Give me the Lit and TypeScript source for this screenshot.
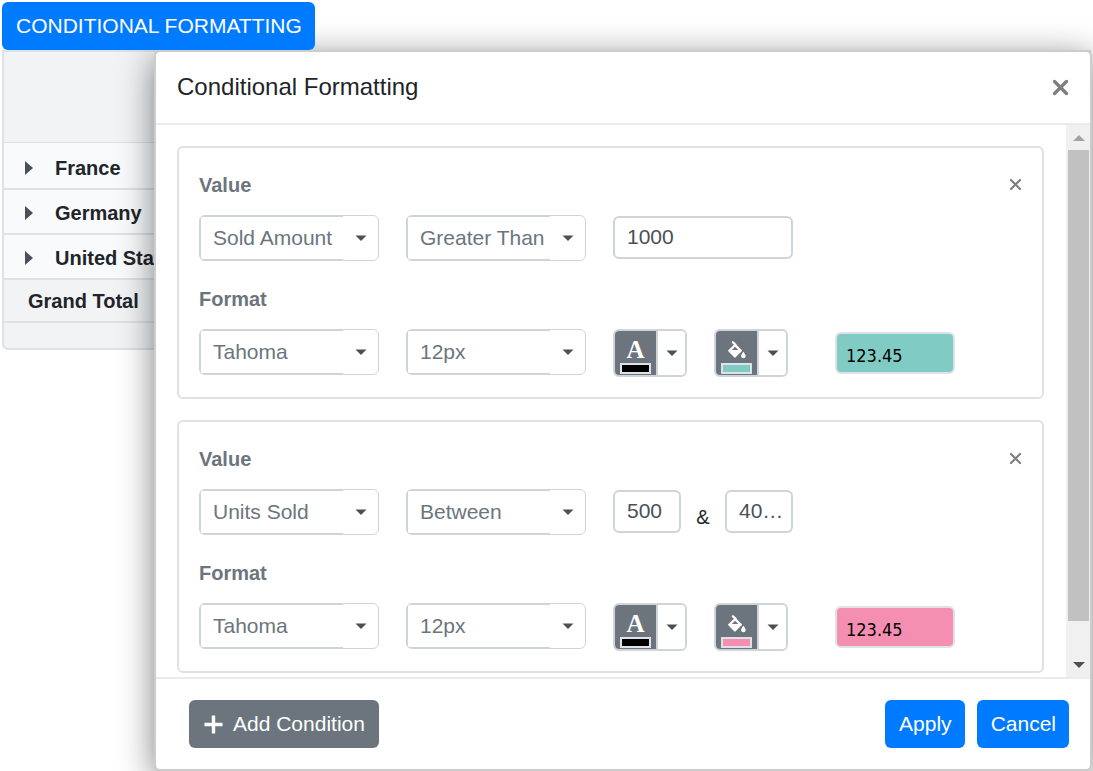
import { LitElement, html, css, svg } from "lit";
import { customElement, property } from "lit/decorators.js";

interface Condition {
  measure: string;
  operator: string;
  values: string[];
  font: string;
  size: string;
  color: string;
  fill: string;
}

const conditions: Condition[] = [
  { measure: "Sold Amount", operator: "Greater Than", values: ["1000"], font: "Tahoma", size: "12px", color: "#000000", fill: "#80cbc4" },
  { measure: "Units Sold", operator: "Between", values: ["500", "40000"], font: "Tahoma", size: "12px", color: "#000000", fill: "#f48fb1" },
];

const base = css`
  * {
    box-sizing: border-box;
  }
  button,
  input,
  select {
    font-family: inherit;
    font-size: 21px;
    margin: 0;
  }
  button {
    cursor: pointer;
  }
  svg {
    display: block;
  }
  .btn {
    display: flex;
    align-items: center;
    height: 48px;
    padding: 0 13px 0 14px;
    border: 0;
    border-radius: 6px;
    background: #007bff;
    color: #fff;
    white-space: nowrap;
  }
  .btn.secondary {
    gap: 10px;
    padding: 0 14px 0 15px;
    background: #6c757d;
  }
  .close {
    padding: 0;
    border: 0;
    background: none;
    color: #7f7f7f;
  }
`;

const caret = html`<svg class="caret" width="12" height="6" viewBox="0 0 12 6" aria-hidden="true">
  <path d="M0.5 0.5H11.5L6 6Z" fill="#495057" />
</svg>`;

const cross = (size: number, weight: number) => html`<svg width=${size} height=${size} viewBox="0 0 16 16" aria-hidden="true">
  ${svg`<path d="M2.4 2.4L13.6 13.6M13.6 2.4L2.4 13.6" fill="none" stroke="currentColor" stroke-width=${weight} stroke-linecap="round" />`}
</svg>`;

@customElement("condition-card")
class ConditionCard extends LitElement {
  @property({ attribute: false }) condition!: Condition;

  static styles = [
    base,
    css`
      :host {
        display: block;
        border: 2px solid #dee2e6;
        border-radius: 6px;
        padding: 22px 20px 20px;
      }
      .head {
        display: flex;
        justify-content: space-between;
        align-items: center;
        height: 30px;
        margin-bottom: 15px;
      }
      .head .close {
        padding-bottom: 1px;
      }
      h3 {
        margin: 0;
        font-size: 20px;
        line-height: 30px;
        font-weight: bold;
        color: #6c757d;
      }
      .row {
        display: flex;
        align-items: flex-start;
        gap: 27px;
      }
      .row.values {
        margin-bottom: 23px;
      }
      .select {
        display: grid;
        width: 180px;
      }
      select,
      .select .caret {
        grid-area: 1 / 1;
      }
      select {
        appearance: none;
        height: 46px;
        padding: 0 36px 2px 13px;
        border: 1px solid #ced4da;
        border-radius: 6px;
        color: #6c757d;
        background:
          linear-gradient(#ced4da, #ced4da) left / 1px 100% no-repeat,
          linear-gradient(#ced4da, #ced4da) top left / calc(100% - 35px) 1px no-repeat,
          linear-gradient(#ced4da, #ced4da) bottom left / calc(100% - 35px) 1px no-repeat,
          #fff;
      }
      .select .caret {
        place-self: center end;
        margin-right: 12px;
        pointer-events: none;
      }
      input {
        width: 180px;
        height: 43px;
        margin-top: 1px;
        padding: 0 5px 2px 12px;
        border: 2px solid #ced4da;
        border-radius: 6px;
        color: #495057;
        background: #fff;
        text-overflow: ellipsis;
      }
      .range {
        display: flex;
        align-items: center;
        width: 180px;
      }
      .range input {
        width: 68px;
        flex: none;
      }
      .range .and {
        flex: 1;
        padding-top: 12px;
        text-align: center;
        font-size: 20px;
        color: #212529;
      }
      .split {
        display: flex;
        width: 74px;
        height: 48px;
        border: 2px solid #ced4da;
        border-radius: 6px;
        overflow: hidden;
      }
      .split button {
        padding: 0;
        border: 0;
      }
      .pick {
        display: flex;
        flex-direction: column;
        align-items: center;
        justify-content: flex-end;
        gap: 4px;
        width: 41px;
        background: #6c757d;
        color: #fff;
      }
      .letter {
        font-family: "Liberation Serif", serif;
        font-size: 25px;
        font-weight: bold;
        line-height: 18px;
      }
      .swatch {
        flex: none;
        width: 31px;
        height: 11px;
        margin-bottom: 1px;
        border: 2px solid #dee2e6;
      }
      .split .open {
        display: flex;
        flex: 1;
        align-items: center;
        justify-content: center;
        border-left: 2px solid #ced4da;
        background: #fff;
      }
      .preview {
        width: 120px;
        height: 42px;
        margin: 3px 0 0 20px;
        padding: 4px 9px 0;
        border: 2px solid #dee2e6;
        border-radius: 6px;
        font-family: Tahoma, "DejaVu Sans Condensed", "Noto Sans", sans-serif;
        font-size: 18px;
        line-height: 36px;
      }
    `,
  ];

  private pick(value: string, label: string) {
    return html`<div class="select">
      <select aria-label=${label}>
        <option selected>${value}</option>
      </select>
      ${caret}
    </div>`;
  }

  private split(label: string, color: string, icon: unknown) {
    return html`<div class="split">
      <button class="pick" aria-label=${label}>
        ${icon}
        <span class="swatch" style="background:${color}"></span>
      </button>
      <button class="open" aria-label="${label} options">${caret}</button>
    </div>`;
  }

  render() {
    const c = this.condition;
    return html`
      <div class="head">
        <h3>Value</h3>
        <button class="close" aria-label="Remove condition">${cross(13, 2.6)}</button>
      </div>
      <div class="row values">
        ${this.pick(c.measure, "Measure")} ${this.pick(c.operator, "Operator")}
        ${c.values.length === 1
          ? html`<input type="text" aria-label="Value" .value=${c.values[0]} />`
          : html`<div class="range">
              <input type="text" aria-label="From" .value=${c.values[0]} />
              <span class="and">&amp;</span>
              <input type="text" aria-label="To" .value=${c.values[1]} />
            </div>`}
      </div>
      <div class="head"><h3>Format</h3></div>
      <div class="row">
        ${this.pick(c.font, "Font family")} ${this.pick(c.size, "Font size")}
        ${this.split("Font color", c.color, html`<span class="letter">A</span>`)}
        ${this.split(
          "Background color",
          c.fill,
          html`<svg width="18" height="18" viewBox="0 0 18 18" aria-hidden="true">
            <path d="M4.9 1.2L7.4 3.6" fill="none" stroke="#fff" stroke-width="2.2" stroke-linecap="round" />
            <path d="M7.2 3.9L13 9.6L6.9 15.6L1.2 9.8Z" fill="#fff" stroke="#fff" stroke-width="2" stroke-linejoin="round" />
            <path d="M3.8 9L7.1 5.8L10.3 9Z" fill="#6c757d" />
            <path d="M15.4 10.8C16.4 12.3 17.7 13.6 17.7 15A2.3 2.3 0 0 1 13.1 15C13.1 13.6 14.4 12.3 15.4 10.8Z" fill="#fff" />
          </svg>`
        )}
        <div class="preview" style="background:${c.fill};color:${c.color}">123.45</div>
      </div>
    `;
  }
}

@customElement("app-root")
class AppRoot extends LitElement {
  static styles = [
    base,
    css`
      :host {
        display: block;
        box-sizing: border-box;
        position: relative;
        height: 100vh;
        overflow: hidden;
        padding: 2px;
        background: #fff;
        font-family: "Liberation Sans", Arial, sans-serif;
        color: #212529;
      }
      .launch {
        position: relative;
        z-index: 2;
      }
      .pivot {
        width: 100%;
        border: 2px solid #dee2e6;
        border-radius: 0 0 6px 6px;
        border-spacing: 0;
        overflow: hidden;
        background: #f2f3f5;
        font-size: 20px;
        line-height: 24px;
      }
      .pivot th {
        height: 45px;
        padding: 0 0 8px 51px;
        border-bottom: 2px solid #dee2e6;
        background: #f8fafc;
        text-align: left;
        vertical-align: bottom;
      }
      .pivot .corner th {
        height: 91px;
        border-bottom-width: 1px;
        background: #f2f3f5;
      }
      .pivot .first th {
        height: 47px;
      }
      .pivot .total th {
        height: 43px;
        padding-left: 24px;
        background: #f2f3f5;
      }
      .pivot .rest td {
        height: 25px;
        padding: 0;
      }
      .member {
        display: flex;
        align-items: center;
        gap: 22px;
        margin-left: -30px;
      }
      .dialog {
        position: absolute;
        inset: 50px 1px 0 154px;
        z-index: 1;
        display: flex;
        flex-direction: column;
        border: 2px solid #ccc;
        border-radius: 6px;
        background: #fff;
        box-shadow: 0 7px 34px rgba(0, 0, 0, 0.5);
      }
      header {
        display: flex;
        align-items: center;
        justify-content: space-between;
        height: 73px;
        padding: 0 21px;
        border-bottom: 2px solid #e9ecef;
      }
      h2 {
        margin: 0;
        padding-bottom: 2px;
        font-size: 24px;
        font-weight: normal;
        line-height: 36px;
      }
      .body {
        display: flex;
        flex: 1;
        min-height: 0;
      }
      .conditions {
        display: flex;
        flex: 1;
        flex-direction: column;
        gap: 21px;
        overflow-y: auto;
        scrollbar-width: none;
        padding: 21px 22px 21px 21px;
      }
      condition-card {
        flex: none;
      }
      .scrollbar {
        display: flex;
        flex-direction: column;
        width: 24px;
        padding: 0 1px 0 2px;
        background: #f0f0f0;
      }
      .arrow {
        display: flex;
        align-items: center;
        justify-content: center;
        height: 25px;
        flex: none;
      }
      .track {
        display: flex;
        flex: 1;
        flex-direction: column;
      }
      .thumb {
        flex: 15;
        background: #c1c1c1;
      }
      .track::after {
        content: "";
        flex: 1;
      }
      footer {
        display: flex;
        align-items: center;
        gap: 12px;
        padding: 21px 21px 21px 33px;
        border-top: 2px solid #e9ecef;
      }
      .secondary {
        margin-right: auto;
      }
    `,
  ];

  render() {
    return html`
      <button class="btn launch">CONDITIONAL FORMATTING</button>
      <table class="pivot">
        <tbody>
          <tr class="corner"><th></th></tr>
          ${["France", "Germany", "United States"].map(
            (name, i) => html`<tr class=${i === 0 ? "first" : ""}>
              <th scope="row">
                <span class="member">
                  <svg width="8" height="14" viewBox="0 0 8 14" aria-hidden="true"><path d="M0 0L8 7L0 14Z" fill="#495057" /></svg>
                  ${name}
                </span>
              </th>
            </tr>`
          )}
          <tr class="total"><th scope="row">Grand Total</th></tr>
          <tr class="rest"><td></td></tr>
        </tbody>
      </table>

      <section class="dialog" role="dialog" aria-labelledby="title">
        <header>
          <h2 id="title">Conditional Formatting</h2>
          <button class="close" aria-label="Close">${cross(17, 3.2)}</button>
        </header>
        <div class="body">
          <div class="conditions">
            ${conditions.map((c) => html`<condition-card .condition=${c}></condition-card>`)}
          </div>
          <div class="scrollbar" aria-hidden="true">
            <div class="arrow">
              <svg width="12" height="6" viewBox="0 0 12 6"><path d="M0 6H12L6 0Z" fill="#a3a3a3" /></svg>
            </div>
            <div class="track"><div class="thumb"></div></div>
            <div class="arrow">
              <svg width="12" height="6" viewBox="0 0 12 6"><path d="M0 0H12L6 6Z" fill="#505050" /></svg>
            </div>
          </div>
        </div>
        <footer>
          <button class="btn secondary">
            <svg width="19" height="19" viewBox="0 0 19 19" aria-hidden="true">
              <path d="M9.5 0.5V18.5M0.5 9.5H18.5" fill="none" stroke="#fff" stroke-width="3.4" />
            </svg>
            Add Condition
          </button>
          <button class="btn">Apply</button>
          <button class="btn">Cancel</button>
        </footer>
      </section>
    `;
  }
}
